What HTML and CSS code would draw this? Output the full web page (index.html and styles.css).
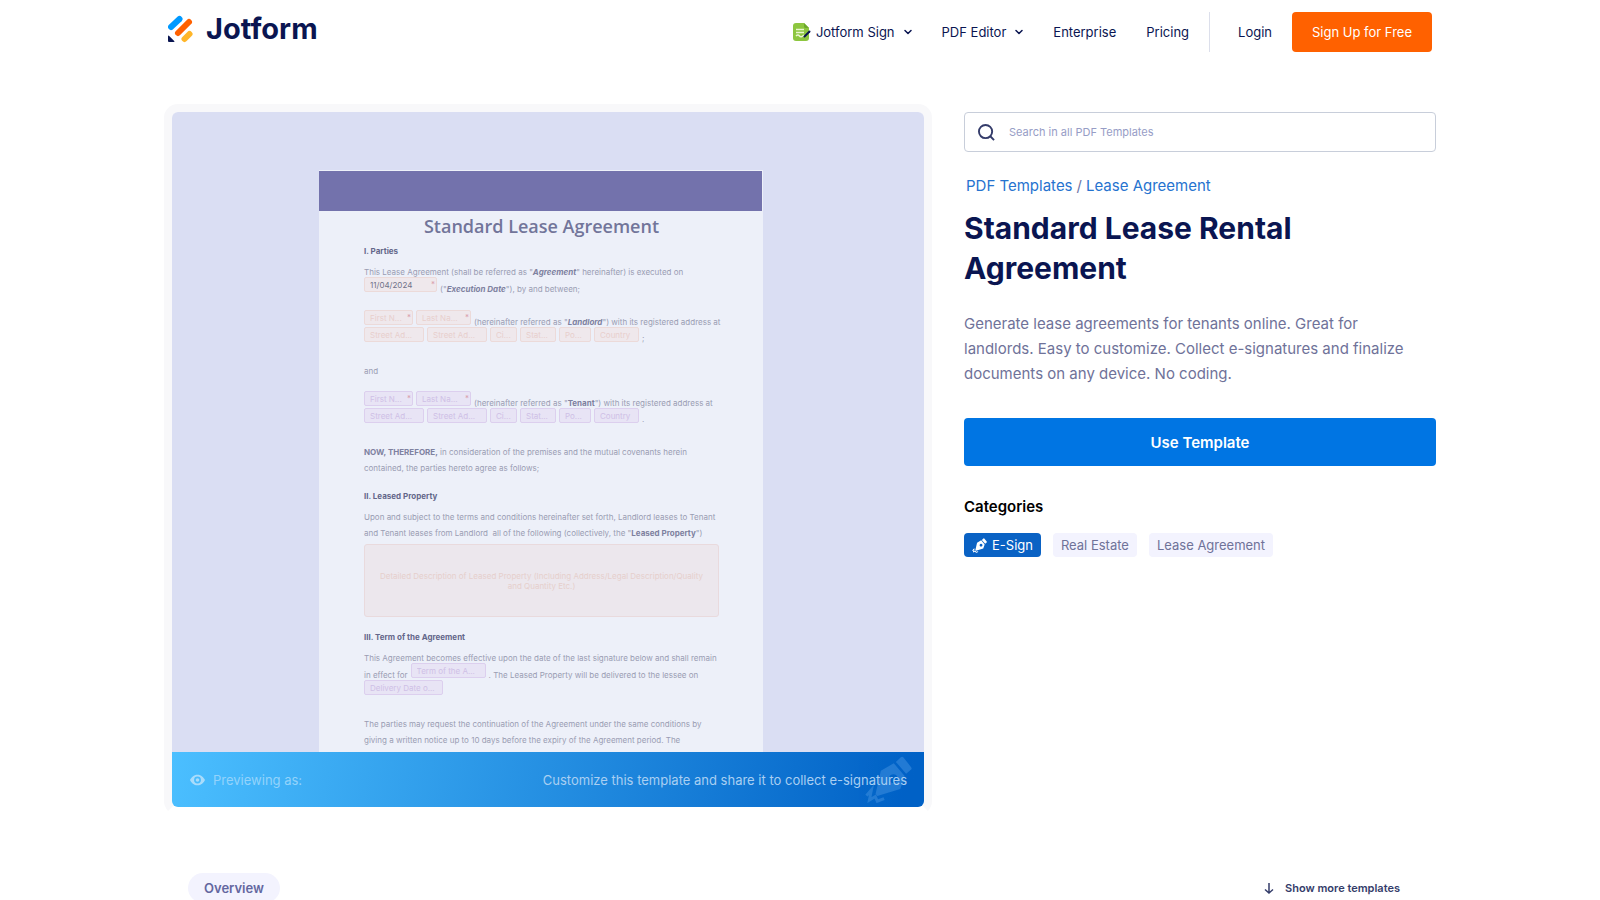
FILE: index.html
```html
<!DOCTYPE html>
<html lang="en">
<head>
<meta charset="utf-8">
<meta name="viewport" content="width=device-width, initial-scale=1">
<title>Standard Lease Rental Agreement</title>
<link rel="stylesheet" href="styles.css">
</head>
<body>
<header class="site-header">
  <a class="logo" href="#">
    <svg class="logo-mark" viewBox="0 0 26 28" aria-hidden="true">
      <g fill="none" stroke-width="6" stroke-linecap="round">
        <path d="M3 12 11.500 4" stroke="#0099ff"/>
        <path d="M10 18 21 7" stroke="#ff6100"/>
        <path d="M16.500 24 21.500 19" stroke="#ffb629"/>
      </g>
      <path d="M0 21.500q0-1.500 1.200-.5l5 5q1 1-.5 1H1q-1 0-1-1z" fill="#0a1551"/>
    </svg>
    <span class="logo-name">Jotform</span>
  </a>
  <nav class="nav">
    <a class="nav-link" href="#">
      <svg class="sign-icon" viewBox="0 0 18 20" aria-hidden="true">
        <path d="M3 1h8l5 5v10a3 3 0 0 1-3 3H3a3 3 0 0 1-3-3V4a3 3 0 0 1 3-3z" fill="#8dc63f"/>
        <path d="M11 1l5 5h-3.500Q11 6 11 4.500z" fill="#6da82c"/>
        <path d="M3 7.500h8M3 10.500h8M3 14q2-2 3.500 0t4.500-1" fill="none" stroke="#eaf7cf" stroke-width="1.500"/>
        <path d="M11.500 14.500 16.500 9.500" stroke="#0a1551" stroke-width="2" stroke-linecap="round"/>
      </svg>
      Jotform Sign
      <svg class="chevron" viewBox="0 0 8 8" aria-hidden="true"><path d="M1 2.500 4 5.500 7 2.500"/></svg>
    </a>
    <a class="nav-link" href="#">PDF Editor
      <svg class="chevron" viewBox="0 0 8 8" aria-hidden="true"><path d="M1 2.500 4 5.500 7 2.500"/></svg>
    </a>
    <a class="nav-link" href="#">Enterprise</a>
    <a class="nav-link" href="#">Pricing</a>
  </nav>
  <div class="account">
    <a class="nav-link" href="#">Login</a>
    <button class="signup" type="button">Sign Up for Free</button>
  </div>
</header>

<main class="template">
  <section class="preview" aria-label="Template preview">
    <div class="stage">
      <article class="paper">
        <div class="paper-band"></div>
        <div class="paper-body">
          <h2 class="doc-title">Standard Lease Agreement</h2>
          <h3 class="doc-heading">I. Parties</h3>
          <p class="doc-text after-heading">This Lease Agreement (shall be referred as "<b><i>Agreement</i></b>" hereinafter) is executed on</p>
          <div class="doc-row tight">
            <span class="field landlord date"><input aria-label="Execution date" value="11/04/2024" readonly><span class="star">*</span></span>
            <span>("<b><i>Execution Date</i></b>"), by and between;</span>
          </div>
          <div class="doc-row gap-m">
            <span class="field landlord first"><input aria-label="Landlord first name" placeholder="First N..."><span class="star">*</span></span>
            <span class="field landlord last"><input aria-label="Landlord last name" placeholder="Last Na..."><span class="star">*</span></span>
            <span>(hereinafter referred as "<b><i>Landlord</i></b>") with its registered address at</span>
          </div>
          <div class="doc-row address">
            <span class="field landlord street"><input aria-label="Landlord street address" placeholder="Street Ad..."></span>
            <span class="field landlord street"><input aria-label="Landlord street address line 2" placeholder="Street Ad..."></span>
            <span class="field landlord city"><input aria-label="Landlord city" placeholder="Ci..."></span>
            <span class="field landlord state"><input aria-label="Landlord state" placeholder="Stat..."></span>
            <span class="field landlord post"><input aria-label="Landlord postal code" placeholder="Po..."></span>
            <span class="field landlord country"><input aria-label="Landlord country" placeholder="Country"></span>
            <span>;</span>
          </div>
          <p class="doc-text gap-l">and</p>
          <div class="doc-row gap-s">
            <span class="field tenant first"><input aria-label="Tenant first name" placeholder="First N..."><span class="star">*</span></span>
            <span class="field tenant last"><input aria-label="Tenant last name" placeholder="Last Na..."><span class="star">*</span></span>
            <span>(hereinafter referred as "<b>Tenant</b>") with its registered address at</span>
          </div>
          <div class="doc-row address">
            <span class="field tenant street"><input aria-label="Tenant street address" placeholder="Street Ad..."></span>
            <span class="field tenant street"><input aria-label="Tenant street address line 2" placeholder="Street Ad..."></span>
            <span class="field tenant city"><input aria-label="Tenant city" placeholder="Ci..."></span>
            <span class="field tenant state"><input aria-label="Tenant state" placeholder="Stat..."></span>
            <span class="field tenant post"><input aria-label="Tenant postal code" placeholder="Po..."></span>
            <span class="field tenant country"><input aria-label="Tenant country" placeholder="Country"></span>
            <span>.</span>
          </div>
          <p class="doc-text gap-l"><b>NOW, THEREFORE,</b> in consideration of the premises and the mutual covenants herein<br>contained, the parties hereto agree as follows;</p>
          <h3 class="doc-heading gap-s">II. Leased Property</h3>
          <p class="doc-text after-heading">Upon and subject to the terms and conditions hereinafter set forth, Landlord leases to Tenant<br>and Tenant leases from Landlord&nbsp; all of the following (collectively, the "<b>Leased Property</b>")</p>
          <div class="description">Detailed Description of Leased Property (Including Address/Legal Description/Quality and Quantity Etc.)</div>
          <h3 class="doc-heading gap-s">III. Term of the Agreement</h3>
          <p class="doc-text after-heading">This Agreement becomes effective upon the date of the last signature below and shall remain</p>
          <div class="doc-row tight">
            <span>in effect for</span>
            <span class="field tenant term"><input aria-label="Term of the agreement" placeholder="Term of the A..."></span>
            <span>. The Leased Property will be delivered to the lessee on</span>
          </div>
          <div class="doc-row address">
            <span class="field tenant delivery"><input aria-label="Delivery date" placeholder="Delivery Date o..."></span>
          </div>
          <p class="doc-text gap-l">The parties may request the continuation of the Agreement under the same conditions by<br>giving a written notice up to 10 days before the expiry of the Agreement period. The</p>
        </div>
      </article>
    </div>
    <div class="preview-bar">
      <svg class="pen-mark" viewBox="0 0 16 16" aria-hidden="true">
        <path d="M10.500 2 12.200.400q.5-.4.9.1l2.600 3.300q.4.500-.1.900L14 6z"/>
        <path fill-rule="evenodd" d="M9.800 2.500 13.500 6.800 12 11.200 4.200 13.600 3.600 12.900 5.400 5zM9.600 6.200a1.500 1.500 0 1 0 .1 0z"/>
        <path d="M.5 13.500 2.200 11.500 1.500 15 3.500 13.800 4.200 15.400 6.500 14.500" fill="none" stroke="currentColor" stroke-width="1"/>
      </svg>
      <span class="previewing">
        <svg class="eye" viewBox="0 0 14 12" aria-hidden="true"><path fill-rule="evenodd" d="M7 1C3.500 1 1.200 3.500 0 6c1.200 2.500 3.500 5 7 5s5.800-2.500 7-5c-1.200-2.500-3.500-5-7-5zm0 1.800a3.200 3.200 0 1 1 0 6.400 3.200 3.200 0 0 1 0-6.400z"/><circle cx="7" cy="6" r="1.700"/></svg>
        Previewing as:
      </span>
      <span class="bar-note">Customize this template and share it to collect e-signatures</span>
    </div>
  </section>

  <aside class="details">
    <label class="search">
      <svg class="search-icon" viewBox="0 0 18 18" aria-hidden="true"><circle cx="8" cy="8" r="7"/><path d="M13 13 17 17"/></svg>
      <input class="search-input" type="search" aria-label="Search in all PDF Templates" placeholder="Search in all PDF Templates">
    </label>
    <nav class="crumbs" aria-label="Breadcrumb"><a href="#">PDF Templates</a><span>/</span><a href="#">Lease Agreement</a></nav>
    <h1 class="title">Standard Lease Rental Agreement</h1>
    <p class="summary">Generate lease agreements for tenants online. Great for landlords. Easy to customize. Collect e-signatures and finalize documents on any device. No coding.</p>
    <button class="use-template" type="button">Use Template</button>
    <h2 class="categories-title">Categories</h2>
    <div class="tags">
      <a class="tag tag-sign" href="#">
        <svg class="tag-pen" viewBox="0 0 16 16" aria-hidden="true">
          <path d="M10.500 2 12.200.400q.5-.4.9.1l2.600 3.300q.4.500-.1.900L14 6z"/>
          <path fill-rule="evenodd" d="M9.800 2.500 13.500 6.800 12 11.200 4.200 13.600 3.600 12.900 5.400 5zM9.600 6.200a1.500 1.500 0 1 0 .1 0z"/>
          <path d="M.5 13.500 2.200 11.500 1.500 15 3.500 13.800 4.200 15.400 6.500 14.500" fill="none" stroke="currentColor" stroke-width="1"/>
        </svg>
        E-Sign
      </a>
      <a class="tag" href="#">Real Estate</a>
      <a class="tag" href="#">Lease Agreement</a>
    </div>
  </aside>
</main>

<section class="more">
  <a class="overview" href="#">Overview</a>
  <a class="show-more" href="#">
    <svg class="arrow" viewBox="0 0 10 12" aria-hidden="true"><path d="M5 1v10M1 7.500 5 11 9 7.500"/></svg>
    Show more templates
  </a>
</section>
</body>
</html>
```

FILE: styles.css
```css
* { box-sizing: border-box; }

body {
  margin: 0;
  background: #fff;
  color: #0a1551;
  font-family: Inter, "Liberation Sans", sans-serif;
  font-size: 13px;
}

a { color: inherit; text-decoration: none; }
h1, h2, h3, p { margin: 0; }
button, input { font-family: inherit; }

/* Header */
.site-header {
  display: flex;
  align-items: center;
  max-width: 1264px;
  height: 64px;
  margin: 0 auto;
}
.logo { display: flex; align-items: center; gap: 12px; margin-right: auto; height: 58px; align-self: flex-start; }
.logo-mark { width: 26px; height: 28px; }
.logo-name { font-size: 29px; font-weight: 700; line-height: 32px; }
.nav { display: flex; align-items: center; gap: 30px; padding-right: 20px; }
.nav-link { display: flex; align-items: center; font-size: 13px; line-height: 20px; }
.sign-icon { width: 18px; height: 20px; margin-right: 5px; }
.chevron { width: 8px; height: 8px; margin-left: 9px; fill: none; stroke: #0a1551; stroke-width: 1.500; stroke-linecap: round; stroke-linejoin: round; }
.account { display: flex; align-items: center; gap: 20px; padding-left: 28px; border-left: 1px solid #dcdfeb; }
.signup {
  height: 40px;
  padding: 0 20px;
  border: 0;
  border-radius: 4px;
  background: #ff6100;
  color: #fff;
  font-size: 13px;
}

/* Template area */
.template {
  display: grid;
  grid-template-columns: 768fr 472fr;
  gap: 32px;
  align-items: start;
  max-width: 1272px;
  margin: 40px auto 0;
}
.preview { border: 8px solid #f8f8fa; border-bottom-color: #fff; border-radius: 14px; }
.stage {
  padding: 58px 34px 0 20px;
  border-radius: 6px 6px 0 0;
  background: #dadef3;
}
.paper {
  max-width: 444px;
  margin: 0 auto;
  padding-top: 1px;
  background: #edf0f9;
  color: #9a9db3;
  font-size: 8px;
}
.paper-band { height: 40px; margin-right: 1px; background: #7372ac; }
.paper-body { padding: 0 44px 4px 45px; }
.doc-title { color: #72759a; font-family: "Open Sans", sans-serif; font-size: 18px; font-weight: 600; line-height: 30px; text-align: center; white-space: nowrap; }
.doc-heading { margin-top: 2px; color: #64678a; font-size: 8px; line-height: 16px; }
.doc-text { line-height: 16px; white-space: nowrap; }
.doc-text b, .doc-row b { color: #7e819f; }
.after-heading { margin-top: 5px; }
.doc-row { display: flex; align-items: flex-end; gap: 3px; height: 16px; line-height: 8px; white-space: nowrap; }
.doc-row.tight { margin-top: -3px; }
.doc-row.address { height: 15px; margin-top: 1px; }
.gap-s { margin-top: 12px; }
.gap-m { margin-top: 17px; }
.gap-l { margin-top: 21px; }
.field {
  display: flex;
  align-self: flex-start;
  flex: none;
  height: 15px;
  border: 1px solid #ecdad9;
  border-radius: 2px;
  background: #efe8ec;
}
.field input {
  width: 100%;
  min-width: 0;
  padding: 0 0 0 5px;
  border: 0;
  background: none;
  color: #6f7289;
  font-size: 8px;
  line-height: 12px;
}
.field input::placeholder { color: #e8cfcc; opacity: 1; }
.field.tenant { border-color: #dccfee; background: #e8e4f5; }
.field.tenant input::placeholder { color: #cfc0e6; }
.star { padding: 2px 1px 0 0; color: #d9a0ae; }
.date { width: 73px; }
.first { width: 49px; }
.last { width: 55px; }
.street { width: 60px; }
.city { width: 27px; }
.state { width: 36px; }
.post { width: 32px; }
.country { width: 45px; }
.term { width: 75px; }
.delivery { width: 79px; }
.description {
  display: flex;
  align-items: center;
  height: 73px;
  margin-top: 3px;
  padding: 0 12px;
  border: 1px solid #e9dadd;
  border-radius: 3px;
  background: #ece7ed;
  color: #e6cfcc;
  line-height: 10px;
  text-align: center;
}
.preview-bar {
  position: relative;
  display: flex;
  justify-content: space-between;
  align-items: center;
  height: 55px;
  padding: 0 17px 0 18px;
  border-radius: 0 0 6px 6px;
  background: linear-gradient(100deg, #4bbfff 0%, #0061c6 98%);
  overflow: hidden;
}
.previewing { display: flex; align-items: center; gap: 8px; color: #93d3fb; }
.eye { width: 15px; height: 14px; fill: #a9dcfb; }
.bar-note { position: relative; color: #a9cff2; }
.pen-mark { position: absolute; right: 12px; top: 4px; width: 47px; height: 47px; color: #3a8bdc; fill: #3a8bdc; opacity: .6; }

/* Details */
.details { padding-top: 8px; }
.search {
  display: flex;
  align-items: center;
  gap: 14px;
  height: 40px;
  padding: 0 12px 0 13px;
  border: 1px solid #c8ceda;
  border-radius: 4px;
}
.search-icon { flex: none; width: 17px; height: 17px; fill: none; stroke: #343c6a; stroke-width: 2; }
.search-input { flex: 1; min-width: 0; padding: 0; border: 0; outline: 0; background: none; font-size: 11px; }
.search-input::placeholder { color: #979dc6; opacity: 1; }
.crumbs { display: flex; gap: 4px; margin: 22px 0 0 2px; color: #6f76a7; font-size: 15px; line-height: 24px; }
.crumbs a { color: #2673cf; }
.title { margin-top: 10px; font-size: 30px; font-weight: 700; line-height: 40px; }
.summary { margin-top: 23px; padding-right: 20px; color: #6f7299; font-size: 15px; line-height: 25px; }
.use-template {
  display: block;
  width: 100%;
  height: 48px;
  margin-top: 32px;
  border: 0;
  border-radius: 4px;
  background: #0075e3;
  color: #fff;
  font-size: 15px;
  font-weight: 600;
}
.categories-title { margin-top: 28px; color: #000; font-size: 15px; font-weight: 600; line-height: 26px; }
.tags { display: flex; flex-wrap: wrap; gap: 12px; margin-top: 13px; }
.tag { display: flex; align-items: center; gap: 5px; height: 24px; padding: 0 8px; border-radius: 4px; background: #f3f3fe; color: #6f7299; }
.tag-sign { background: #0a62c4; color: #fff; }
.tag-pen { width: 15px; height: 15px; fill: currentColor; }

/* Lower links */
.more { display: flex; justify-content: space-between; align-items: center; max-width: 1272px; margin: 58px auto 0; padding: 0 36px 0 24px; }
.overview { padding: 0 16px; border-radius: 16px; background: #f3f3fe; color: #6367a0; font-weight: 600; line-height: 30px; }
.show-more { display: flex; align-items: center; gap: 11px; color: #343c6a; font-size: 11px; font-weight: 600; line-height: 20px; }
.arrow { width: 10px; height: 12px; fill: none; stroke: #343c6a; stroke-width: 1.500; }
```
